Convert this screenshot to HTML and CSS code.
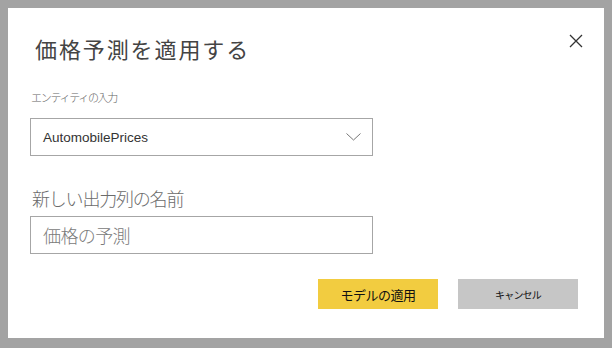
FILE: index.html
```html
<!DOCTYPE html>
<html lang="ja">
<head>
<meta charset="utf-8">
<link rel="stylesheet" href="styles.css">
</head>
<body>
<div class="dialog">
  <div class="header">
    <h1 class="title">価格予測を適用する</h1>
    <button class="close" aria-label="閉じる">
      <svg width="14" height="14" viewBox="0 0 14 14"><path d="M1 1 L13 13 M13 1 L1 13" stroke="#333" stroke-width="1.3" fill="none"/></svg>
    </button>
  </div>
  <div class="label-small">エンティティの入力</div>
  <div class="select">
    <span class="select-text">AutomobilePrices</span>
    <svg class="chevron" width="15" height="8" viewBox="0 0 15 8"><path d="M0.5 0.5 L7.5 7 L14.5 0.5" stroke="#777" stroke-width="1" fill="none"/></svg>
  </div>
  <div class="label-large">新しい出力列の名前</div>
  <div class="input">価格の予測</div>
  <div class="actions">
    <button class="btn btn-primary">モデルの適用</button>
    <button class="btn btn-secondary">キャンセル</button>
  </div>
</div>
</body>
</html>
```

FILE: styles.css
```css
html, body {
  margin: 0;
  padding: 0;
}
body {
  background: #a3a3a3;
  padding: 8px 8px 10px 8px;
  font-family: "Liberation Sans", "Noto Sans CJK JP", sans-serif;
}
.dialog {
  background: #fff;
  width: 596px;
  height: 330px;
  box-sizing: border-box;
  padding: 26px 26px 0 22px;
  display: flex;
  flex-direction: column;
}
.header {
  display: flex;
  justify-content: space-between;
  align-items: flex-start;
  height: 28px;
}
.title {
  margin: 0 0 0 5px;
  font-family: "Noto Sans CJK JP", sans-serif;
  font-weight: 400;
  font-size: 22px;
  line-height: 28px;
  letter-spacing: 1.9px;
  color: #444;
}
.close {
  border: 0;
  background: none;
  padding: 0;
  width: 14px;
  height: 14px;
  display: flex;
  transform: translate(5px, 0px);
}
.label-small {
  margin-top: 27px;
  font-family: "Noto Sans CJK JP", sans-serif;
  font-weight: 300;
  font-size: 11px;
  line-height: 16px;
  letter-spacing: -1.3px;
  color: #666;
  padding-left: 1px;
}
.select {
  margin-top: 13px;
  width: 343px;
  height: 38px;
  box-sizing: border-box;
  border: 1px solid #a6a6a6;
  display: flex;
  align-items: center;
  justify-content: space-between;
  padding: 0 11px 0 12px;
}
.select-text {
  font-size: 13.5px;
  color: #333;
}
.chevron {
  display: block;
}
.label-large {
  margin-top: 30px;
  font-family: "Noto Sans CJK JP", sans-serif;
  font-weight: 300;
  font-size: 18px;
  line-height: 24px;
  letter-spacing: -1.2px;
  color: #6b6b6b;
  padding-left: 2px;
}
.input {
  margin-top: 6px;
  width: 343px;
  height: 38px;
  box-sizing: border-box;
  border: 1px solid #a6a6a6;
  display: flex;
  align-items: center;
  padding-left: 12px;
  font-family: "Noto Sans CJK JP", sans-serif;
  font-weight: 300;
  font-size: 18px;
  letter-spacing: -0.6px;
  color: #7a7a7a;
}
.actions {
  margin-top: 25px;
  display: flex;
  justify-content: flex-end;
  gap: 20px;
}
.btn {
  width: 120px;
  height: 30px;
  border: 0;
  padding: 0;
  font-family: "Noto Sans CJK JP", sans-serif;
  color: #111;
  display: flex;
  align-items: center;
  justify-content: center;
}
.btn-primary {
  background: #f2cc40;
  font-size: 13px;
  letter-spacing: -0.5px;
}
.btn-secondary {
  background: #c6c6c6;
  font-size: 10px;
  letter-spacing: -0.8px;
}
```
